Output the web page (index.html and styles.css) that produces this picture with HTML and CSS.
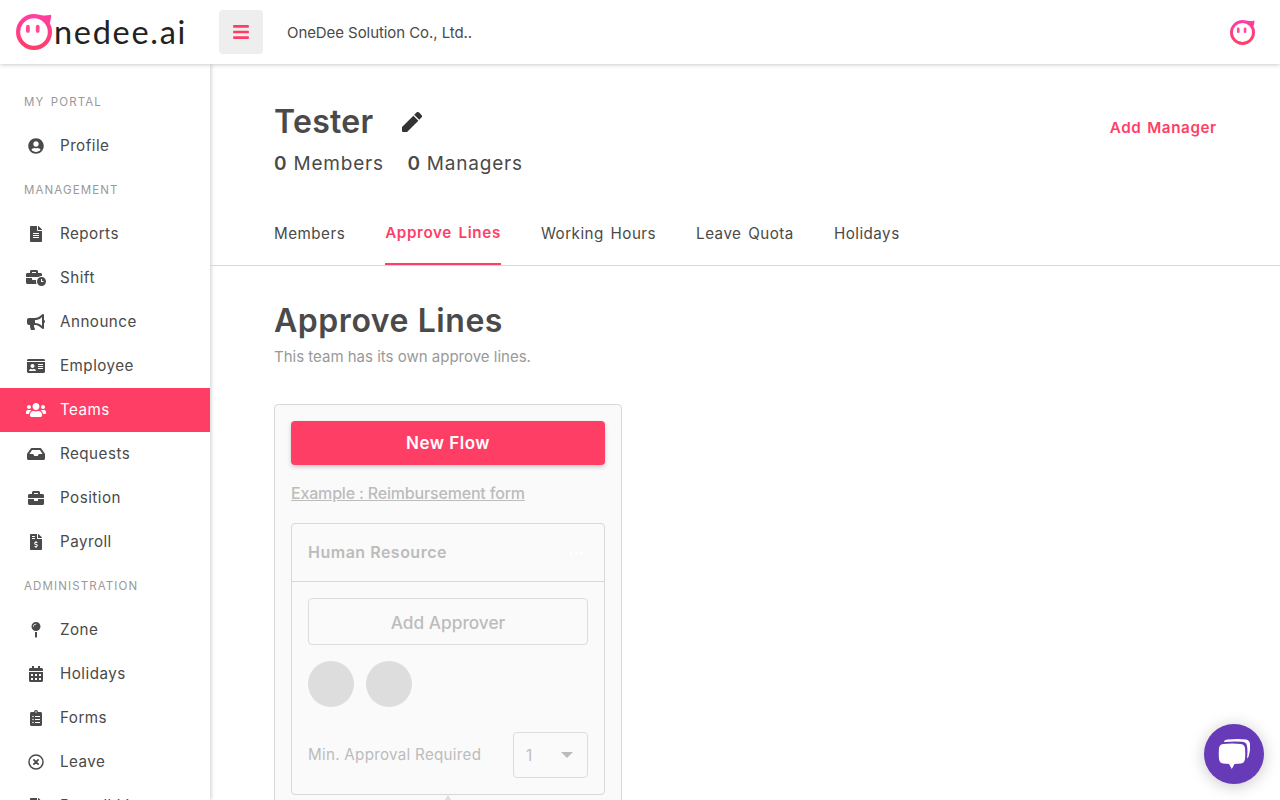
FILE: index.html
```html
<!DOCTYPE html>
<html lang="en">
<head>
<meta charset="utf-8">
<title>Tester – Approve Lines</title>
<link rel="stylesheet" href="styles.css">
</head>
<body>
<svg width="0" height="0" class="defs">
  <defs>
    <linearGradient id="pink" x1="0" y1="0" x2="0" y2="1"><stop offset="0" stop-color="#ff3ea5"/><stop offset="1" stop-color="#ff3e66"/></linearGradient>
    <symbol id="face" viewBox="0 0 36 36">
      <path fill="url(#pink)" fill-rule="evenodd" d="M18 0C22 0 25 1.300 27.500 1.500C30 1.700 32.500 1.200 35 .7C35.800 2.500 34.500 5.500 33.800 9.500C35.500 12 36 15 36 18A18 18 0 1 1 18 0ZM18 4.200A13.800 13.800 0 1 0 18 31.800A13.800 13.800 0 1 0 18 4.200Z"/>
      <rect x="10" y="10.800" width="3.800" height="8" rx="1.900" fill="#ff4a9a"/><rect x="19.800" y="10.800" width="3.800" height="8" rx="1.900" fill="#ff4a9a"/>
    </symbol>
  </defs>
</svg>
<header class="topbar">
  <div class="logo"><svg class="logo-face"><use href="#face"/></svg><span class="logo-text">nedee.ai</span></div>
  <button class="menu-btn" aria-label="Menu"><svg viewBox="0 0 448 512" width="16" height="18"><path d="M16 132h416c9 0 16-7 16-16V76c0-9-7-16-16-16H16C7 60 0 67 0 76v40c0 9 7 16 16 16zm0 160h416c9 0 16-7 16-16v-40c0-9-7-16-16-16H16c-9 0-16 7-16 16v40c0 9 7 16 16 16zm0 160h416c9 0 16-7 16-16v-40c0-9-7-16-16-16H16c-9 0-16 7-16 16v40c0 9 7 16 16 16z"/></svg></button>
  <span class="company">OneDee Solution Co., Ltd..</span>
  <svg class="avatar"><use href="#face"/></svg>
</header>
<div class="shell">
  <nav class="sidebar">
    <h6 class="group">MY PORTAL</h6>
    <a class="item"><svg viewBox="0 0 496 512"><path d="M248 8C111 8 0 119 0 256s111 248 248 248 248-111 248-248S385 8 248 8zm0 96c48.600 0 88 39.400 88 88s-39.400 88-88 88-88-39.400-88-88 39.400-88 88-88zm0 344c-58.700 0-111.300-26.600-146.500-68.200 18.800-35.400 55.600-59.800 98.500-59.800 2.400 0 4.800.4 7.100 1.100 13 4.200 26.600 6.900 40.900 6.900 14.300 0 28-2.700 40.900-6.900 2.300-.7 4.700-1.100 7.100-1.100 42.900 0 79.700 24.400 98.500 59.800C359.300 421.400 306.700 448 248 448z"/></svg><span>Profile</span></a>
    <h6 class="group">MANAGEMENT</h6>
    <a class="item"><svg viewBox="0 0 384 512"><path d="M224 136V0H24C10.700 0 0 10.700 0 24v464c0 13.300 10.700 24 24 24h336c13.300 0 24-10.700 24-24V160H248c-13.200 0-24-10.800-24-24zm64 236c0 6.600-5.400 12-12 12H108c-6.600 0-12-5.400-12-12v-8c0-6.600 5.400-12 12-12h168c6.600 0 12 5.400 12 12v8zm0-64c0 6.600-5.400 12-12 12H108c-6.600 0-12-5.400-12-12v-8c0-6.600 5.400-12 12-12h168c6.600 0 12 5.400 12 12v8zm0-72v8c0 6.600-5.400 12-12 12H108c-6.600 0-12-5.400-12-12v-8c0-6.600 5.400-12 12-12h168c6.600 0 12 5.400 12 12zm96-114.100v6.100H256V0h6.100c6.400 0 12.500 2.500 17 7l97.900 98c4.500 4.500 7 10.600 7 16.900z"/></svg><span>Reports</span></a>
    <a class="item"><svg viewBox="0 0 640 512"><path d="M496 224c-79.590 0-144 64.410-144 144s64.410 144 144 144 144-64.410 144-144-64.410-144-144-144zm64 150.290c0 5.340-4.370 9.710-9.710 9.710h-60.570c-5.340 0-9.710-4.370-9.710-9.710v-76.570c0-5.340 4.370-9.710 9.710-9.710h12.570c5.340 0 9.710 4.370 9.710 9.710V352h38.290c5.340 0 9.710 4.370 9.710 9.710v12.580zM496 192c5.400 0 10.720.33 16 .81V144c0-25.600-22.400-48-48-48h-80V48c0-25.600-22.400-48-48-48H176c-25.600 0-48 22.400-48 48v48H48c-25.600 0-48 22.400-48 48v80h395.120c28.600-20.090 63.350-32 100.880-32zM320 96H192V64h128v32zm6.820 224H208c-8.840 0-16-7.160-16-16v-48H0v144c0 25.600 22.400 48 48 48h291.430C327.100 423.960 320 396.820 320 368c0-16.660 2.480-32.720 6.820-48z"/></svg><span>Shift</span></a>
    <a class="item"><svg viewBox="0 0 576 512"><path d="M576 240c0-23.630-12.950-44.040-32-55.120V32.010C544 23.260 537.020 0 512 0c-7.120 0-14.190 2.380-19.980 7.020l-85.030 68.030C364.280 109.190 310.660 128 256 128H64c-35.350 0-64 28.650-64 64v96c0 35.350 28.650 64 64 64h33.700c-1.390 10.480-2.180 21.140-2.180 32 0 39.770 9.260 77.350 25.560 110.940 5.190 10.690 16.520 17.060 28.400 17.060h74.280c26.050 0 41.690-29.840 25.900-50.560-16.400-21.520-26.150-48.360-26.150-77.440 0-11.110 1.620-21.790 4.410-32H256c54.660 0 108.280 18.810 150.980 52.950l85.030 68.030a32 32 0 0 0 19.980 7.020c24.920 0 32-22.780 32-32V295.130C563.050 284.040 576 263.630 576 240zm-96 141.420l-33.050-26.440C392.950 311.780 325.120 288 256 288v-96c69.120 0 136.950-23.780 190.950-66.980L480 98.580v282.840z"/></svg><span>Announce</span></a>
    <a class="item"><svg viewBox="0 0 576 512"><path d="M528 32H48C21.500 32 0 53.500 0 80v16h576V80c0-26.500-21.500-48-48-48zM0 432c0 26.500 21.500 48 48 48h480c26.500 0 48-21.500 48-48V128H0v304zm352-232c0-4.400 3.600-8 8-8h144c4.400 0 8 3.600 8 8v16c0 4.400-3.600 8-8 8H360c-4.400 0-8-3.600-8-8v-16zm0 64c0-4.400 3.600-8 8-8h144c4.400 0 8 3.600 8 8v16c0 4.400-3.600 8-8 8H360c-4.400 0-8-3.600-8-8v-16zm0 64c0-4.400 3.600-8 8-8h144c4.400 0 8 3.600 8 8v16c0 4.400-3.600 8-8 8H360c-4.400 0-8-3.600-8-8v-16zM176 192c35.300 0 64 28.700 64 64s-28.700 64-64 64-64-28.700-64-64 28.700-64 64-64zM67.100 396.200C75.500 370.500 99.600 352 128 352h8.200c12.300 5.100 25.700 8 39.800 8s27.600-2.900 39.800-8h8.200c28.400 0 52.500 18.500 60.900 44.200 3.200 9.900-5.200 19.800-15.600 19.800H82.700c-10.400 0-18.800-10-15.600-19.800z"/></svg><span>Employee</span></a>
    <a class="item active"><svg viewBox="0 0 640 512"><path d="M96 224c35.300 0 64-28.700 64-64s-28.700-64-64-64-64 28.700-64 64 28.700 64 64 64zm448 0c35.300 0 64-28.700 64-64s-28.700-64-64-64-64 28.700-64 64 28.700 64 64 64zm32 32h-64c-17.600 0-33.500 7.100-45.100 18.600 40.300 22.100 68.900 62 75.100 109.400h66c17.700 0 32-14.300 32-32v-32c0-35.300-28.700-64-64-64zm-256 0c61.900 0 112-50.100 112-112S381.900 32 320 32 208 82.100 208 144s50.100 112 112 112zm76.800 32h-8.300c-20.800 10-43.900 16-68.500 16s-47.600-6-68.500-16h-8.300C179.600 288 128 339.600 128 403.200V432c0 26.500 21.500 48 48 48h288c26.500 0 48-21.500 48-48v-28.800c0-63.600-51.600-115.200-115.200-115.200zm-223.700-13.400C161.500 263.100 145.600 256 128 256H64c-35.300 0-64 28.700-64 64v32c0 17.700 14.300 32 32 32h65.900c6.300-47.400 34.900-87.300 75.200-109.400z"/></svg><span>Teams</span></a>
    <a class="item"><svg viewBox="0 0 576 512"><path d="M567.940 243.910L462.250 85.370A48 48 0 0 0 422.310 64H153.690a48 48 0 0 0-39.940 21.370L8.060 243.910A48 48 0 0 0 0 270.530V400c0 26.510 21.490 48 48 48h480c26.510 0 48-21.490 48-48V270.530a48 48 0 0 0-8.060-26.620zM162.250 128h251.500l85.330 128H376l-32 64H232l-32-64H76.920l85.330-128z"/></svg><span>Requests</span></a>
    <a class="item"><svg viewBox="0 0 512 512"><path d="M320 336c0 8.840-7.160 16-16 16h-96c-8.840 0-16-7.160-16-16v-48H0v144c0 25.600 22.400 48 48 48h416c25.600 0 48-22.400 48-48V288H320v48zm144-208h-80V80c0-25.600-22.400-48-48-48H176c-25.600 0-48 22.400-48 48v48H48c-25.600 0-48 22.400-48 48v80h512v-80c0-25.600-22.400-48-48-48zm-144 0H192V96h128v32z"/></svg><span>Position</span></a>
    <a class="item"><svg viewBox="0 0 384 512"><path d="M377 105L279.100 7c-4.500-4.500-10.600-7-17-7H256v128h128v-6.100c0-6.300-2.500-12.400-7-16.900zm-153 31V0H24C10.700 0 0 10.700 0 24v464c0 13.300 10.700 24 24 24h336c13.300 0 24-10.700 24-24V160H248c-13.200 0-24-10.800-24-24zM64 72c0-4.420 3.580-8 8-8h80c4.420 0 8 3.580 8 8v16c0 4.420-3.580 8-8 8H72c-4.420 0-8-3.580-8-8V72zm0 80v-16c0-4.420 3.580-8 8-8h80c4.420 0 8 3.580 8 8v16c0 4.420-3.580 8-8 8H72c-4.420 0-8-3.580-8-8zm144 263.880V440c0 4.420-3.580 8-8 8h-16c-4.420 0-8-3.580-8-8v-24.290c-11.290-.58-22.270-4.520-31.370-11.350-3.900-2.930-4.100-8.770-.57-12.140l11.750-11.210c2.770-2.640 6.890-2.760 10.130-.73 3.870 2.420 8.260 3.720 12.820 3.720h28.110c6.500 0 11.800-5.920 11.800-13.190 0-5.950-3.610-11.190-8.770-12.730l-45-13.500c-18.590-5.580-31.580-23.420-31.580-43.390 0-24.520 19.050-44.440 42.670-45.070V232c0-4.420 3.580-8 8-8h16c4.420 0 8 3.580 8 8v24.290c11.290.58 22.270 4.510 31.370 11.350 3.900 2.930 4.100 8.770.57 12.140l-11.750 11.210c-2.770 2.640-6.890 2.760-10.130.73-3.870-2.430-8.260-3.720-12.820-3.720h-28.110c-6.500 0-11.800 5.920-11.800 13.190 0 5.950 3.610 11.190 8.770 12.730l45 13.500c18.590 5.580 31.580 23.420 31.580 43.390 0 24.530-19.050 44.440-42.670 45.070z"/></svg><span>Payroll</span></a>
    <h6 class="group">ADMINISTRATION</h6>
    <a class="item"><svg viewBox="0 0 288 512"><path d="M112 316.940v156.690l22.020 33.020c4.750 7.120 15.220 7.120 19.970 0L176 473.630V316.940c-10.390 1.920-21.060 3.060-32 3.060s-21.610-1.140-32-3.060zM144 0C64.470 0 0 64.470 0 144s64.470 144 144 144 144-64.470 144-144S223.530 0 144 0zm0 76c-37.500 0-68 30.500-68 68 0 6.620-5.380 12-12 12s-12-5.380-12-12c0-50.730 41.280-92 92-92 6.620 0 12 5.380 12 12s-5.380 12-12 12z"/></svg><span>Zone</span></a>
    <a class="item"><svg viewBox="0 0 448 512"><path fill-rule="evenodd" d="M448 160v-48c0-26-21-48-48-48h-48V12c0-7-5-12-12-12h-40c-7 0-12 5-12 12v52H160V12c0-7-5-12-12-12h-40c-7 0-12 5-12 12v52H48C21 64 0 86 0 112v48zM0 192h448v272c0 27-21 48-48 48H48c-27 0-48-21-48-48zM64 256v64h64v-64zM192 256v64h64v-64zM320 256v64h64v-64zM64 384v64h64v-64zM192 384v64h64v-64zM320 384v64h64v-64z"/></svg><span>Holidays</span></a>
    <a class="item"><svg viewBox="0 0 384 512"><path fill-rule="evenodd" d="M336 64h-80a64 64 0 0 0-128 0H48C21 64 0 86 0 112v352c0 27 21 48 48 48h288c27 0 48-21 48-48V112c0-26-21-48-48-48zM192 40a24 24 0 1 1 0 48 24 24 0 1 1 0-48zM96 232a24 24 0 1 1 0-48 24 24 0 1 1 0 48zM96 328a24 24 0 1 1 0-48 24 24 0 1 1 0 48zM96 424a24 24 0 1 1 0-48 24 24 0 1 1 0 48zM160 192h160v32H160zM160 288h160v32H160zM160 384h160v32H160z"/></svg><span>Forms</span></a>
    <a class="item"><svg viewBox="0 0 512 512"><g fill="none" stroke="currentColor" stroke-width="48"><circle cx="256" cy="256" r="224"/><path stroke-width="56" d="M172 172L340 340M340 172L172 340"/></g></svg><span>Leave</span></a>
    <a class="item"><svg viewBox="0 0 384 512"><path d="M224 136V0H24C11 0 0 11 0 24v464c0 13 11 24 24 24h336c13 0 24-11 24-24V160H248c-13 0-24-11-24-24zM384 122v6H256V0h6c6 0 12 2 17 7l98 98c5 5 7 11 7 17z"/></svg><span>Payroll List</span></a>
  </nav>
  <main class="main">
    <section class="team">
      <div>
        <div class="title-row"><h1 class="team-name">Tester</h1><svg class="pen" viewBox="0 0 512 512"><path d="M291 93l128 128-278 278-13 13H24C9 512 0 503 0 488V384l13-13zM498 74l-60-60c-19-19-49-19-68 0l-57 57 128 128 57-57c19-19 19-49 0-68z"/></svg></div>
        <div class="counts"><span><b>0</b> Members</span><span><b>0</b> Managers</span></div>
      </div>
      <a class="add-manager">Add Manager</a>
    </section>
    <div class="tabs"><a>Members</a><a class="current">Approve Lines</a><a>Working Hours</a><a>Leave Quota</a><a>Holidays</a></div>
    <section class="content">
      <h2 class="heading">Approve Lines</h2>
      <p class="sub">This team has its own approve lines.</p>
      <div class="flow">
        <button class="new-flow">New Flow</button>
        <div class="example"><span>Example : Reimbursement form</span></div>
        <div class="card">
          <div class="card-head"><span class="hr">Human Resource</span><span class="dots">•••</span></div>
          <div class="card-body">
            <div class="add-approver"><span>Add Approver</span></div>
            <div class="circles"><i></i><i></i></div>
            <div class="min-row"><span class="min">Min. Approval Required</span><div class="select"><span>1</span><i></i></div></div>
          </div>
        </div>
        <i class="arrow"></i>
      </div>
    </section>
  </main>
</div>
<div class="chat"><svg viewBox="0 0 60 60" width="60" height="60"><path fill="#fff" d="M20 18Q20 15.500 24 15.500Q34 14.500 42 15.500Q45.500 16 46 20Q46.500 26 45 31Q44.500 34 43 34.500Q44 26 42.800 21Q42 18 38 17.700Q29 17 20 18Z"/><path fill="#fff" d="M19 20Q28 18.800 37 20Q40.500 20.500 41 24Q41.500 30 41 35Q40.500 39 37 39.500L30.500 40L27.800 45L25 40L19 39.500Q15.500 39 15 35Q14.500 30 15 24Q15.500 20.500 19 20Z"/></svg></div>
</body>
</html>
```
FILE: styles.css
```css
* { box-sizing: border-box; }
body { margin: 0; height: 800px; overflow: hidden; background: #fff; color: #4a4a4a; font-family: Inter, "Noto Sans", sans-serif; font-size: 15.2px; position: relative; }
h1, h2, h6, p { margin: 0; }
.defs { position: absolute; }
span, h1, h2, a { white-space: nowrap; }
.topbar { position: relative; z-index: 2; height: 64px; display: flex; align-items: center; background: #fff; box-shadow: 0 1px 4px rgba(0,0,0,.2); }
.logo { width: 219px; padding-left: 16px; display: flex; align-items: center; }
.logo-face { width: 36px; height: 36px; }
.logo-text { margin-left: 2px; font-family: Lato, sans-serif; font-size: 32.500px; line-height: 40px; letter-spacing: 1.700px; color: #222; }
.menu-btn { width: 44px; height: 44px; border: 0; border-radius: 4px; background: #eee; padding: 0; display: flex; align-items: center; justify-content: center; }
.menu-btn svg { fill: #ff3e66; }
.company { margin-left: 24px; font-size: 15px; letter-spacing: -.07px; }
.avatar { width: 25px; height: 25px; margin-left: auto; margin-right: 25px; }
.shell { display: flex; height: 736px; }
.sidebar { width: 210px; flex: none; padding-top: 16px; overflow: hidden; box-shadow: 1px 0 4px rgba(0,0,0,.2); }
.group { height: 44px; line-height: 44px; padding-left: 24px; font-size: 11.500px; font-weight: 400; letter-spacing: 1.120px; word-spacing: 2px; color: #999; }
.item { height: 44px; display: flex; align-items: center; padding-left: 26px; gap: 14px; letter-spacing: .47px; }
.item svg { width: 20px; height: 16px; fill: currentColor; }
.item span { padding-bottom: 2px; }
.active { background: #ff3e66; color: #fff; }
.main { flex: 1; }
.team { height: 137px; padding: 36px 64px 0; display: flex; justify-content: space-between; }
.title-row { display: flex; align-items: center; height: 44px; gap: 28px; }
.team-name { font-size: 32px; font-weight: 600; line-height: 44px; letter-spacing: .3px; }
.pen { width: 20px; height: 20px; fill: #333; }
.counts { display: flex; gap: 23.500px; font-size: 19px; line-height: 40px; letter-spacing: .8px; }
.counts b { font-weight: 600; }
.add-manager { margin-top: 16px; margin-right: -.7px; line-height: 24px; color: #ff3e66; font-weight: 600; letter-spacing: .6px; word-spacing: 1.500px; }
.tabs { height: 65px; border-bottom: 1px solid #d8d8d8; display: flex; gap: 40px; padding-left: 64px; letter-spacing: .48px; word-spacing: 2px; }
.tabs a { height: 64px; line-height: 66px; }
.tabs .current { line-height: 64px; color: #ff3e66; font-weight: 600; border-bottom: 2px solid #ff3e66; letter-spacing: .65px; }
.content { padding: 33px 64px 0; }
.heading { font-size: 32px; line-height: 44px; font-weight: 600; letter-spacing: .55px; }
.sub { line-height: 28px; color: #999; font-size: 15px; }
.flow { width: 348px; height: 440px; margin-top: 33px; padding: 16px; background: #fafafa; border: 1px solid #d8d8d8; border-radius: 4px; color: #bcbcbc; }
.new-flow { width: 100%; height: 44px; border: 0; border-radius: 4px; background: #ff3e66; color: #fff; font: 600 17px Inter, sans-serif; letter-spacing: .5px; box-shadow: 0 2px 4px rgba(0,0,0,.2); }
.example { margin: 15px 0 17px; line-height: 26px; font-size: 16px; font-weight: 500; letter-spacing: -.18px; text-decoration: underline; }
.card { height: 272px; border: 1px solid #d8d8d8; border-radius: 4px; }
.card-head { height: 58px; border-bottom: 1px solid #d8d8d8; display: flex; align-items: center; justify-content: space-between; padding: 0 16px; }
.hr { font-weight: 600; font-size: 16px; letter-spacing: .5px; padding-bottom: 2px; }
.dots { color: #fff; font-size: 9px; padding-right: 4px; }
.card-body { padding: 16px; }
.add-approver { height: 47px; border: 1px solid #ddd; border-radius: 4px; display: flex; align-items: center; justify-content: center; font-size: 17.300px; font-weight: 500; padding-top: 2px; }
.circles { display: flex; gap: 12px; margin-top: 16px; }
.circles i { width: 46px; height: 46px; border-radius: 50%; background: #ddd; }
.min-row { margin-top: 25px; display: flex; align-items: center; justify-content: space-between; }
.min { letter-spacing: .27px; padding-bottom: 2px; }
.select { width: 75px; height: 46px; border: 1px solid #ddd; border-radius: 4px; padding: 0 14px 0 12px; display: flex; align-items: center; justify-content: space-between; }
.select i { border: 6px solid transparent; border-top-color: #bcbcbc; border-bottom: 0; }
.arrow { display: block; width: 0; margin: 0 auto; border: 5px solid transparent; border-top: 0; border-bottom: 8px solid #ddd; }
.chat { position: absolute; left: 1204px; top: 724px; z-index: 3; width: 60px; height: 60px; border-radius: 50%; background: #673ab7; box-shadow: 0 2px 16px rgba(0,0,0,.22); }
```
